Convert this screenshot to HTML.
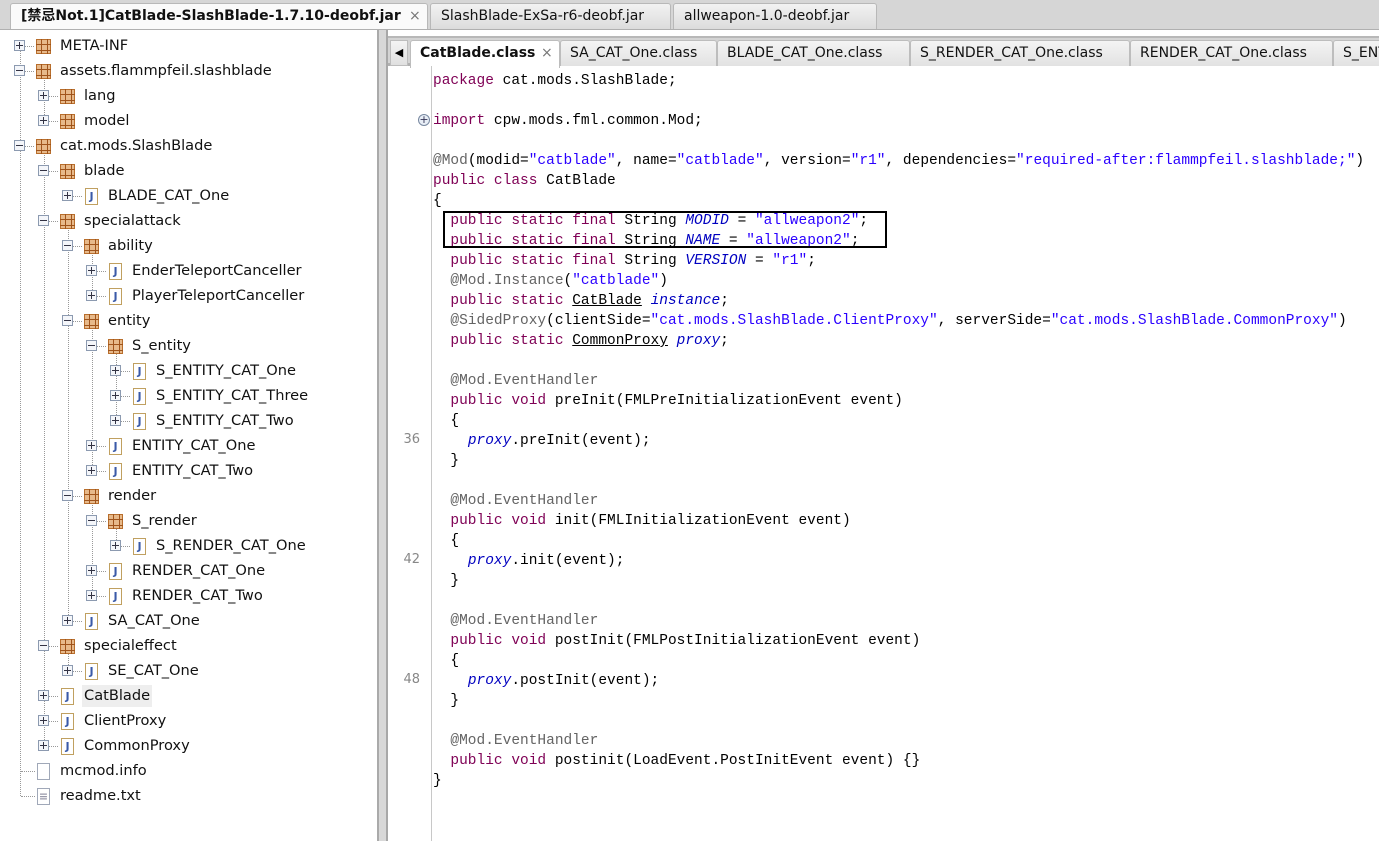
<!DOCTYPE html>
<html><head><meta charset="utf-8"><style>
*{margin:0;padding:0;box-sizing:border-box}
body{width:1379px;height:841px;overflow:hidden;background:#d6d6d6;position:relative;font-family:"DejaVu Sans","Liberation Sans","Noto Sans CJK SC",sans-serif}
.tt{position:absolute;top:3px;height:26px;border:1px solid #b8b8b8;border-bottom:none;border-radius:3px 3px 0 0;background:linear-gradient(#f2f2f2,#dcdcdc);font-size:14px;line-height:24px;padding-left:10px;color:#111}
#left{position:absolute;left:0;top:30px;width:379px;height:811px;background:#fff;border-right:2px solid #aaa}
#split{position:absolute;left:379px;top:30px;width:9px;height:811px;background:#d8d8d8;border-right:2px solid #a8a8a8}
.r{position:absolute;height:22px;font-size:14.6px;line-height:22px;color:#111;white-space:nowrap}
.ex{position:absolute;width:11px;height:11px;border:1px solid #8c9ab0;background:#f4f6fa}
.ex:before{content:"";position:absolute;left:1px;top:4px;width:7px;height:1px;background:#334}
.ex.p:after{content:"";position:absolute;left:4px;top:1px;width:1px;height:7px;background:#334}
.pk{position:absolute;width:15px;height:15px;background:#e7b98a;border:1px solid #b86e2c}
.pk:before{content:"";position:absolute;left:4px;top:-1px;width:5px;height:15px;border-left:1px solid #a0541b;border-right:1px solid #a0541b}
.pk:after{content:"";position:absolute;top:4px;left:-1px;height:5px;width:15px;border-top:1px solid #a0541b;border-bottom:1px solid #a0541b}
.jf{position:absolute;width:13px;height:17px;background:#fff;border:1px solid #c0a060;font:bold 11px "DejaVu Sans",sans-serif;color:#3a5aa8;text-align:center;line-height:15px}
.hl{position:absolute;border-left:1px dotted #999}
.hh{position:absolute;border-top:1px dotted #999;height:1px}
#ed{position:absolute;left:388px;top:30px;width:991px;height:811px;background:#fff}
#etabs{position:absolute;left:388px;top:36px;width:991px;height:30px;background:#d4d4d4;border-bottom:3px solid #b0b0b0;border-top:2px solid #b8b8b8}
.et{position:absolute;top:2px;height:26px;border:1px solid #bdbdbd;border-bottom:none;border-radius:3px 3px 0 0;background:linear-gradient(#f4f4f4,#e2e2e2);font-size:14px;line-height:24px;padding-left:9px;color:#111;white-space:nowrap;overflow:hidden}
#gut{position:absolute;left:431px;top:66px;width:1px;height:775px;background:#c8c8c8}
.c{position:absolute;left:433px;font-family:"Liberation Mono",monospace;font-size:14.5px;line-height:20px;white-space:pre;color:#000}
.k{color:#7f0055}.s{color:#2a00ff}.a{color:#646464}.f{color:#0000c0;font-style:italic}.u{text-decoration:underline}
.ln{position:absolute;left:390px;width:30px;text-align:right;font-family:"DejaVu Sans",sans-serif;font-size:13px;color:#888;line-height:20px}
</style></head><body>
<div class="tt" style="left:10px;width:418px;background:#fafafa;font-weight:bold">[禁忌Not.1]CatBlade-SlashBlade-1.7.10-deobf.jar<span style="position:absolute;left:398px;font-weight:normal;color:#777">×</span></div>
<div class="tt" style="left:430px;width:241px">SlashBlade-ExSa-r6-deobf.jar</div>
<div class="tt" style="left:673px;width:204px">allweapon-1.0-deobf.jar</div>
<div style="position:absolute;left:0;top:29px;width:1379px;height:1px;background:#b0b0b0"></div>
<div id="left">
<div class="hl" style="left:20px;top:20px;height:746px"></div>
<div class="hl" style="left:44px;top:45px;height:50px"></div>
<div class="hl" style="left:44px;top:120px;height:600px"></div>
<div class="hl" style="left:68px;top:195px;height:400px"></div>
<div class="hl" style="left:68px;top:620px;height:25px"></div>
<div class="hl" style="left:92px;top:220px;height:50px"></div>
<div class="hl" style="left:92px;top:295px;height:150px"></div>
<div class="hl" style="left:92px;top:470px;height:100px"></div>
<div class="hl" style="left:116px;top:320px;height:75px"></div>
<div class="hl" style="left:116px;top:495px;height:25px"></div>
</div>
<div id="split"></div>
<div id="tree"></div>
<div id="ed"></div>
<div id="etabs">
<div style="position:absolute;left:2px;top:2px;width:18px;height:26px;background:linear-gradient(#f4f4f4,#e0e0e0);border:1px solid #bdbdbd;font-size:11px;line-height:24px;text-align:center">◀</div>
<div class="et" style="left:22px;width:150px;background:#fff;font-weight:bold;height:28px">CatBlade.class<span style="position:absolute;left:130px;font-weight:normal;color:#777">×</span></div>
<div class="et" style="left:172px;width:157px">SA_CAT_One.class</div>
<div class="et" style="left:329px;width:193px">BLADE_CAT_One.class</div>
<div class="et" style="left:522px;width:220px">S_RENDER_CAT_One.class</div>
<div class="et" style="left:742px;width:203px">RENDER_CAT_One.class</div>
<div class="et" style="left:945px;width:60px">S_ENTITY</div>
</div>
<div id="gut"></div>
<div class="ln" style="top:430px">36</div>
<div class="ln" style="top:550px">42</div>
<div class="ln" style="top:670px">48</div>
<div style="position:absolute;left:418px;top:114px;width:12px;height:12px;border-radius:50%;border:1px solid #7888a0;background:#e8eef6;font-size:11px;line-height:10px;text-align:center;color:#335">+</div>
<div class="c" style="top:71px"><span class="k">package</span> cat.mods.SlashBlade;

<span class="k">import</span> cpw.mods.fml.common.Mod;

<span class="a">@Mod</span>(modid=<span class="s">"catblade"</span>, name=<span class="s">"catblade"</span>, version=<span class="s">"r1"</span>, dependencies=<span class="s">"required-after:flammpfeil.slashblade;"</span>)
<span class="k">public class</span> CatBlade
{
  <span class="k">public static final</span> String <span class="f">MODID</span> = <span class="s">"allweapon2"</span>;
  <span class="k">public static final</span> String <span class="f">NAME</span> = <span class="s">"allweapon2"</span>;
  <span class="k">public static final</span> String <span class="f">VERSION</span> = <span class="s">"r1"</span>;
  <span class="a">@Mod.Instance</span>(<span class="s">"catblade"</span>)
  <span class="k">public static</span> <span class="u">CatBlade</span> <span class="f">instance</span>;
  <span class="a">@SidedProxy</span>(clientSide=<span class="s">"cat.mods.SlashBlade.ClientProxy"</span>, serverSide=<span class="s">"cat.mods.SlashBlade.CommonProxy"</span>)
  <span class="k">public static</span> <span class="u">CommonProxy</span> <span class="f">proxy</span>;

  <span class="a">@Mod.EventHandler</span>
  <span class="k">public void</span> preInit(FMLPreInitializationEvent event)
  {
    <span class="f">proxy</span>.preInit(event);
  }

  <span class="a">@Mod.EventHandler</span>
  <span class="k">public void</span> init(FMLInitializationEvent event)
  {
    <span class="f">proxy</span>.init(event);
  }

  <span class="a">@Mod.EventHandler</span>
  <span class="k">public void</span> postInit(FMLPostInitializationEvent event)
  {
    <span class="f">proxy</span>.postInit(event);
  }

  <span class="a">@Mod.EventHandler</span>
  <span class="k">public void</span> postinit(LoadEvent.PostInitEvent event) {}
}</div>
<div style="position:absolute;left:443px;top:211px;width:444px;height:37px;border:2.5px solid #000"></div>
<script>
var items=[[0,'p','k','META-INF'],[0,'m','k','assets.flammpfeil.slashblade'],[1,'p','k','lang'],[1,'p','k','model'],[0,'m','k','cat.mods.SlashBlade'],[1,'m','k','blade'],[2,'p','j','BLADE_CAT_One'],[1,'m','k','specialattack'],[2,'m','k','ability'],[3,'p','j','EnderTeleportCanceller'],[3,'p','j','PlayerTeleportCanceller'],[2,'m','k','entity'],[3,'m','k','S_entity'],[4,'p','j','S_ENTITY_CAT_One'],[4,'p','j','S_ENTITY_CAT_Three'],[4,'p','j','S_ENTITY_CAT_Two'],[3,'p','j','ENTITY_CAT_One'],[3,'p','j','ENTITY_CAT_Two'],[2,'m','k','render'],[3,'m','k','S_render'],[4,'p','j','S_RENDER_CAT_One'],[3,'p','j','RENDER_CAT_One'],[3,'p','j','RENDER_CAT_Two'],[2,'p','j','SA_CAT_One'],[1,'m','k','specialeffect'],[2,'p','j','SE_CAT_One'],[1,'p','j','CatBlade'],[1,'p','j','ClientProxy'],[1,'p','j','CommonProxy'],[0,'','f','mcmod.info'],[0,'','t','readme.txt']];
var h='';
items.forEach(function(it,i){var y=46+25*i,x=24*it[0];
if(it[1])h+='<div class="ex '+(it[1]=='p'?'p':'')+'" style="left:'+(x+14)+'px;top:'+(y-6)+'px"></div><div class="hh" style="left:'+(x+25)+'px;top:'+y+'px;width:9px"></div>';
else h+='<div class="hh" style="left:'+(x+21)+'px;top:'+y+'px;width:14px"></div>';
if(it[2]=='k')h+='<div class="pk" style="left:'+(x+36)+'px;top:'+(y-7)+'px"></div>';
else if(it[2]=='j')h+='<div class="jf" style="left:'+(x+37)+'px;top:'+(y-8)+'px">J</div>';
else h+='<div class="jf" style="left:'+(x+37)+'px;top:'+(y-8)+'px;border-color:#a0a8b8;color:#99a">'+(it[2]=='t'?'≡':'')+'</div>';
var bg=it[3]=='CatBlade'?'background:#eee;padding:0 2px;margin-left:-2px;':'';
h+='<div class="r" style="left:'+(x+60)+'px;top:'+(y-11)+'px;'+bg+'">'+it[3]+'</div>';});
document.getElementById('tree').innerHTML=h;
</script>
</body></html>
